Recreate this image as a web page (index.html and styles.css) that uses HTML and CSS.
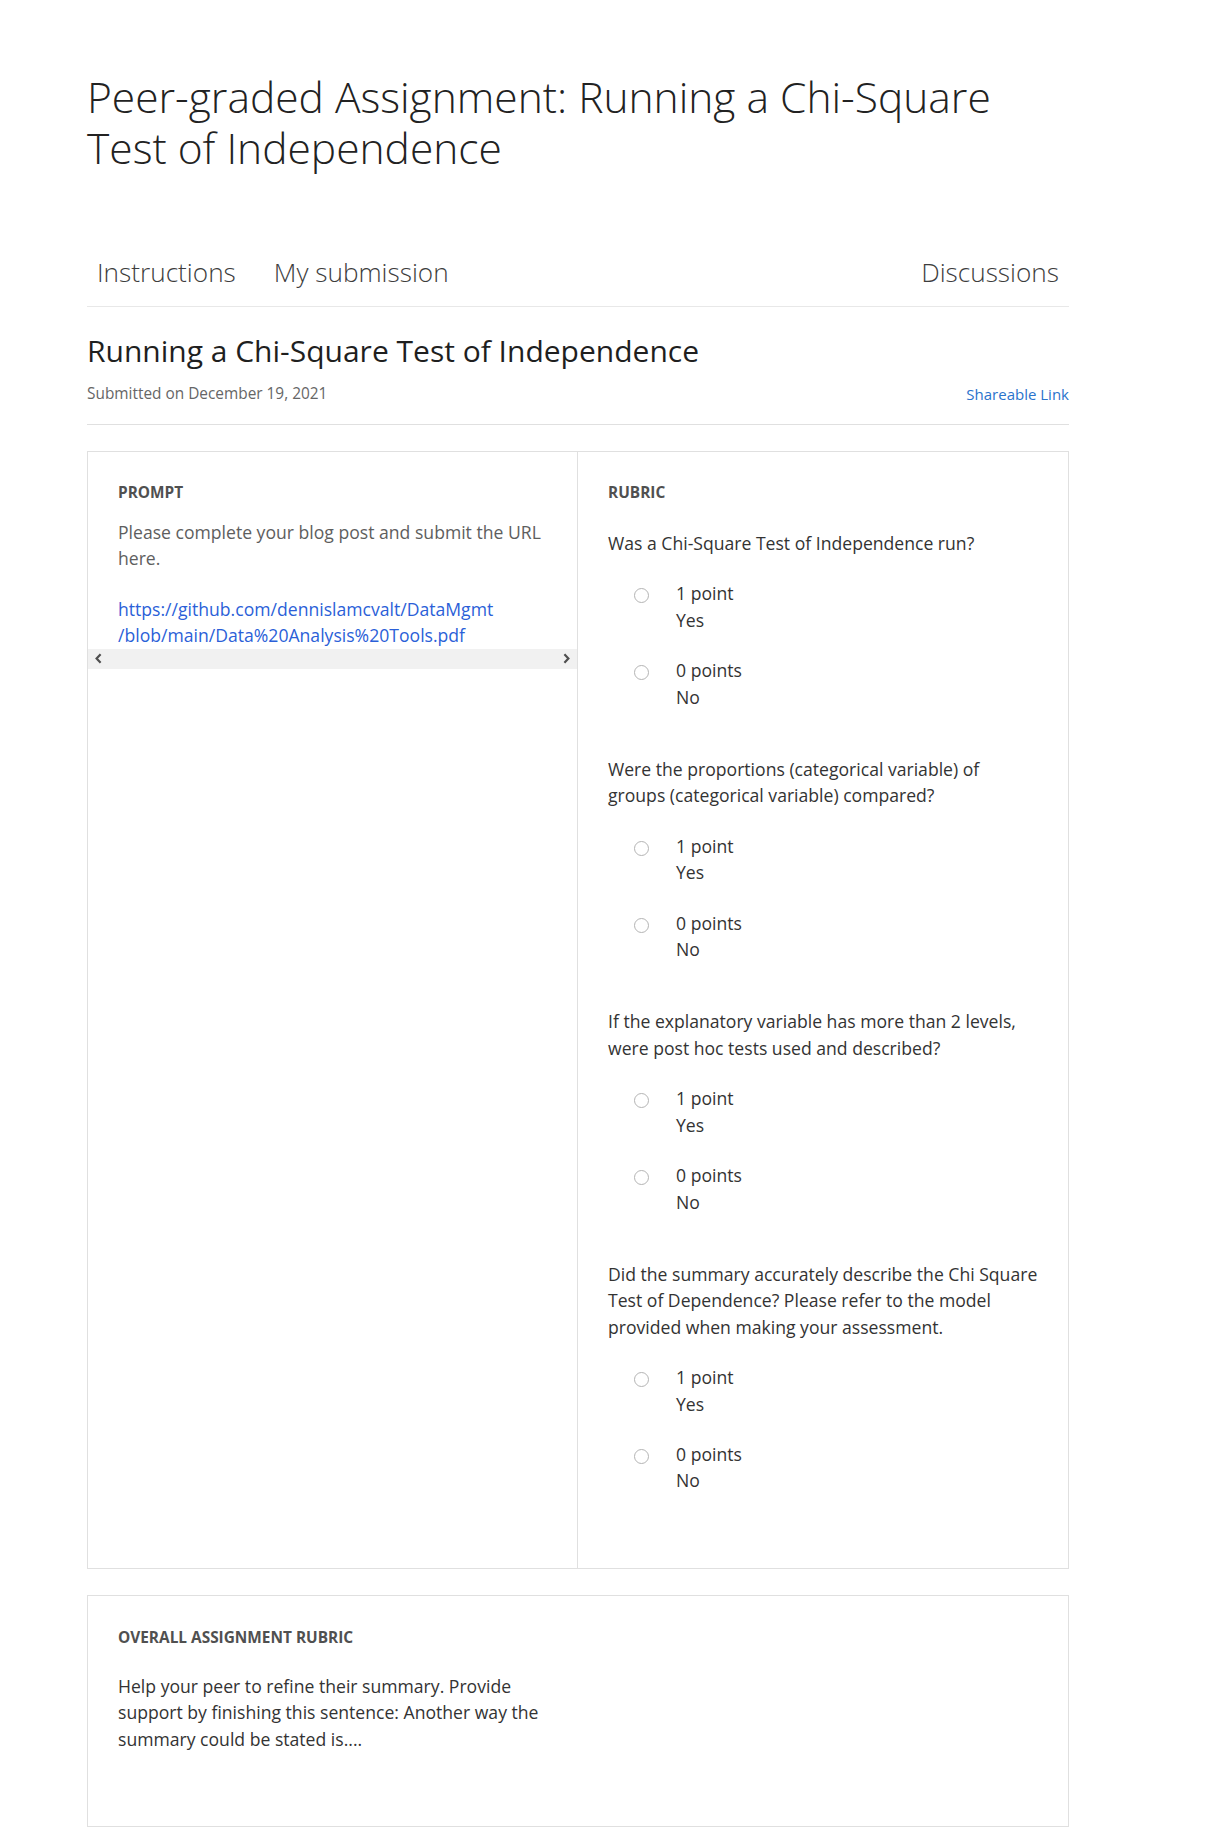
FILE: index.html
```html
<!DOCTYPE html>
<html lang="en">
<head>
<meta charset="utf-8">
<title>Peer-graded Assignment: Running a Chi-Square Test of Independence</title>
<link rel="stylesheet" href="styles.css">
</head>
<body>
<div class="page">
  <h1 class="page-title">Peer-graded Assignment: Running a Chi-Square Test of Independence</h1>

  <nav class="tabs">
    <a class="tab">Instructions</a>
    <a class="tab">My submission</a>
    <a class="tab tab-right">Discussions</a>
  </nav>

  <h2 class="sub-title">Running a Chi-Square Test of Independence</h2>
  <div class="meta">
    <span class="submitted">Submitted on December 19, 2021</span>
    <a class="share">Shareable Link</a>
  </div>

  <section class="card grid">
    <div class="col col-left">
      <div class="scroll-area">
        <div class="label">PROMPT</div>
        <p class="prompt-text">Please complete your blog post and submit the URL here.</p>
        <p class="prompt-link"><a class="url">https://github.com/dennislamcvalt/DataMgmt<wbr>/blob/main/Data%20Analysis%20Tools.pdf</a></p>
      </div>
      <div class="hscroll">
        <svg class="arrow" width="9" height="11" viewBox="0 0 9 11"><path d="M6.6 1.3 L2.6 5.5 L6.6 9.7" fill="none" stroke="#4f4f4f" stroke-width="2.2"/></svg>
        <svg class="arrow" width="9" height="11" viewBox="0 0 9 11"><path d="M2.4 1.3 L6.4 5.5 L2.4 9.7" fill="none" stroke="#4f4f4f" stroke-width="2.2"/></svg>
      </div>
    </div>
    <div class="col col-right">
      <div class="label">RUBRIC</div>

      <div class="question">
        <p class="q-text">Was a Chi-Square Test of Independence run?</p>
        <div class="option"><span class="radio"></span><div class="opt-text"><div>1 point</div><div>Yes</div></div></div>
        <div class="option"><span class="radio"></span><div class="opt-text"><div>0 points</div><div>No</div></div></div>
      </div>

      <div class="question">
        <p class="q-text">Were the proportions (categorical variable) of groups (categorical variable) compared?</p>
        <div class="option"><span class="radio"></span><div class="opt-text"><div>1 point</div><div>Yes</div></div></div>
        <div class="option"><span class="radio"></span><div class="opt-text"><div>0 points</div><div>No</div></div></div>
      </div>

      <div class="question">
        <p class="q-text">If the explanatory variable has more than 2 levels, were post hoc tests used and described?</p>
        <div class="option"><span class="radio"></span><div class="opt-text"><div>1 point</div><div>Yes</div></div></div>
        <div class="option"><span class="radio"></span><div class="opt-text"><div>0 points</div><div>No</div></div></div>
      </div>

      <div class="question">
        <p class="q-text">Did the summary accurately describe the Chi Square Test of Dependence? Please refer to the model provided when making your assessment.</p>
        <div class="option"><span class="radio"></span><div class="opt-text"><div>1 point</div><div>Yes</div></div></div>
        <div class="option"><span class="radio"></span><div class="opt-text"><div>0 points</div><div>No</div></div></div>
      </div>
    </div>
  </section>

  <section class="card overall">
    <div class="label">OVERALL ASSIGNMENT RUBRIC</div>
    <p class="overall-text">Help your peer to refine their summary. Provide support by finishing this sentence: Another way the summary could be stated is....</p>
  </section>
</div>
</body>
</html>
```

FILE: styles.css
```css
* { box-sizing: border-box; }

html, body {
  margin: 0;
  padding: 0;
  background: #ffffff;
}

body {
  font-family: "Open Sans", "Liberation Sans", Arial, sans-serif;
  color: #333333;
}

p { margin: 0; }

.page {
  width: 982px;
  margin-left: 87px;
  padding-top: 71px;
  padding-bottom: 40px;
}

.page-title {
  margin: 0;
  padding-right: 20px;
  font-size: 42.5px;
  line-height: 51px;
  font-weight: 300;
  color: #222222;
}

.tabs {
  display: flex;
  margin-top: 81px;
  padding-bottom: 16px;
  border-bottom: 1px solid #e8e8e8;
}

.tab {
  padding: 0 10px;
  margin-right: 18px;
  font-size: 26.2px;
  line-height: 36px;
  font-weight: 300;
  color: #3d3d3d;
}

.tab-right {
  margin-left: auto;
  margin-right: 0;
}

.sub-title {
  margin: 24px 0 0;
  font-size: 30px;
  line-height: 40px;
  font-weight: 400;
  color: #1f1f1f;
}

.meta {
  display: flex;
  justify-content: space-between;
  margin-top: 12px;
  padding-bottom: 19px;
  border-bottom: 1px solid #e0e0e0;
  font-size: 15.4px;
  line-height: 22px;
}

.submitted { color: #666666; }

.share {
  color: #2a73cc;
  font-size: 15px;
}

.card {
  border: 1px solid #e0e0e0;
  background: #ffffff;
}

.grid {
  display: grid;
  grid-template-columns: 1fr 1fr;
  margin-top: 26px;
}

.col-left {
  border-right: 1px solid #e0e0e0;
}

.scroll-area {
  padding: 31px 30px 0;
}

.label {
  font-size: 15.4px;
  line-height: 20px;
  font-weight: 700;
  color: #505050;
}

.prompt-text {
  margin-top: 16px;
  font-size: 17.6px;
  line-height: 26.4px;
  color: #5e5e5e;
}

.prompt-link {
  margin-top: 24px;
  font-size: 17.6px;
  line-height: 26.4px;
}

.url { color: #2b5fd8; }

.hscroll {
  display: flex;
  justify-content: space-between;
  align-items: center;
  height: 20px;
  padding: 0 6px;
  background: #f1f1f1;
}

.arrow { display: block; }

.col-right {
  padding: 31px 30px 74px;
}

.question {
  margin-top: 46px;
}

.label + .question {
  margin-top: 27px;
}

.q-text {
  font-size: 17.6px;
  line-height: 26.4px;
  color: #333333;
}

.option {
  display: flex;
  align-items: flex-start;
  margin-top: 24px;
  padding-left: 26px;
  font-size: 17.6px;
  line-height: 26.4px;
  color: #333333;
}

.radio {
  flex: none;
  width: 15px;
  height: 15px;
  margin-top: 8px;
  margin-right: 27px;
  border: 1.5px solid #b4b4b4;
  border-radius: 50%;
  background: #ffffff;
}

.overall {
  margin-top: 26px;
  padding: 32px 30px 74px;
}

.overall-text {
  margin-top: 25px;
  max-width: 430px;
  font-size: 17.6px;
  line-height: 26.4px;
  color: #333333;
}
```
